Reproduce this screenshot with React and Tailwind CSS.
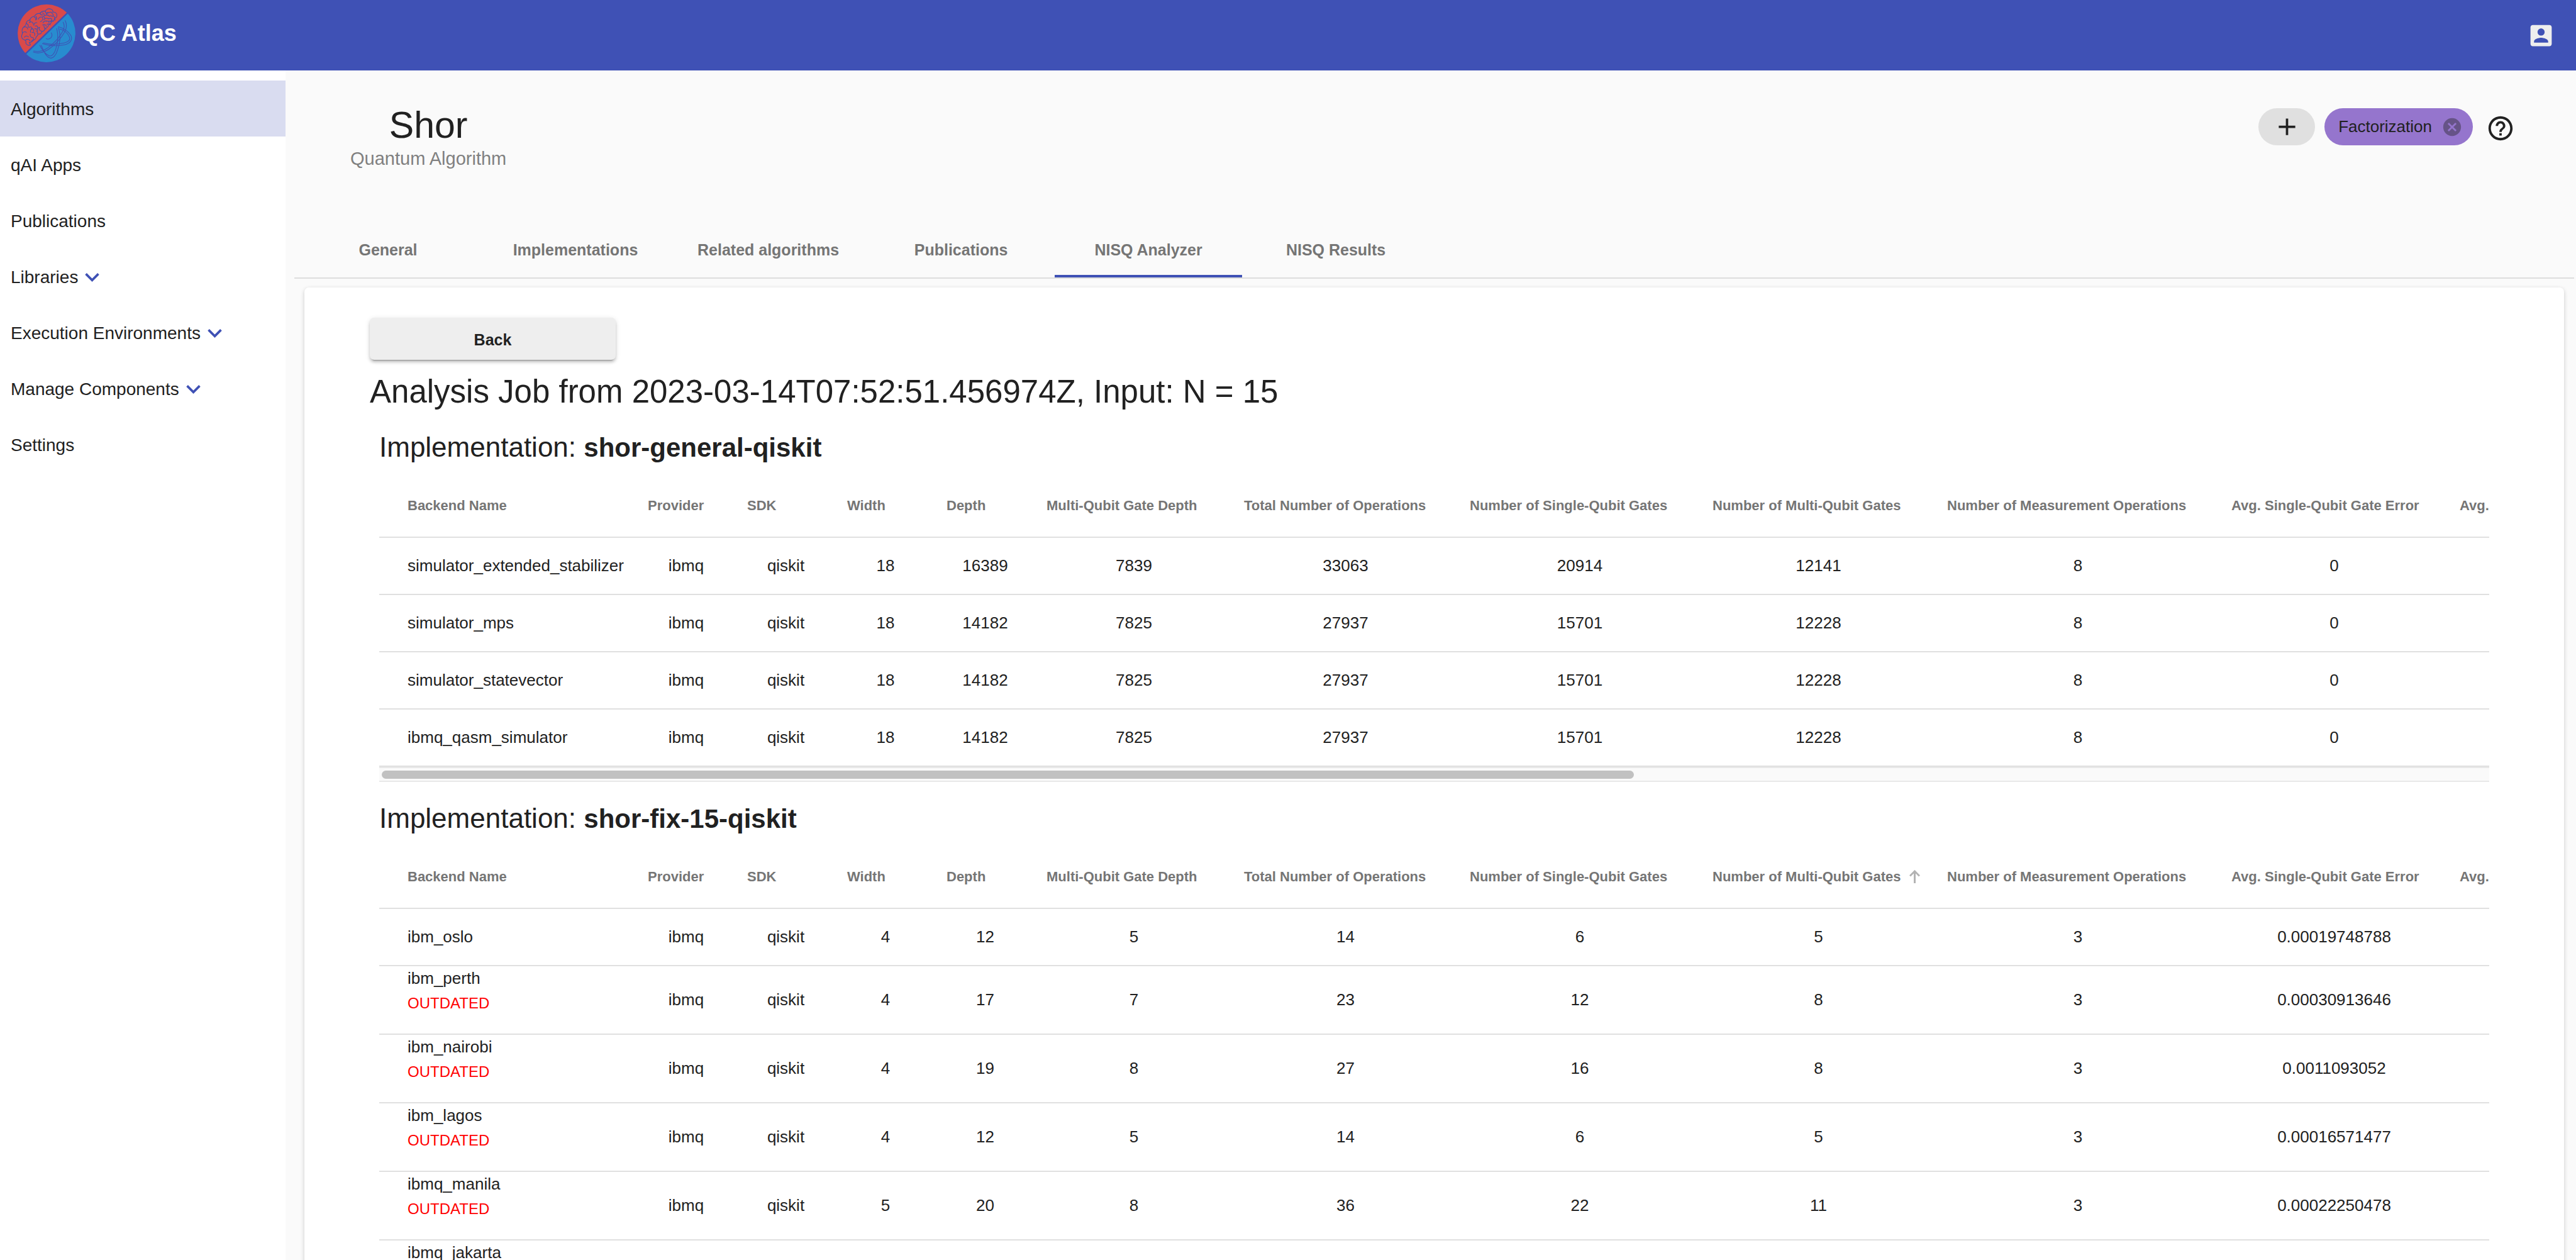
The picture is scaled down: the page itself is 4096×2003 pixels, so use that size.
import React from "react";

const LINKS = [
  { label: "Algorithms", active: true },
  { label: "qAI Apps" },
  { label: "Publications" },
  { label: "Libraries", expandable: true },
  { label: "Execution Environments", expandable: true },
  { label: "Manage Components", expandable: true },
  { label: "Settings" },
];

const TABS = [
  "General",
  "Implementations",
  "Related algorithms",
  "Publications",
  "NISQ Analyzer",
  "NISQ Results",
];

const COLUMNS = [
  { label: "Backend Name", width: "w-[409px]" },
  { label: "Provider", width: "w-[158px]" },
  { label: "SDK", width: "w-[159px]" },
  { label: "Width", width: "w-[158px]" },
  { label: "Depth", width: "w-[159px]" },
  { label: "Multi-Qubit Gate Depth", width: "w-[314px]" },
  { label: "Total Number of Operations", width: "w-[359px]" },
  { label: "Number of Single-Qubit Gates", width: "w-[386px]" },
  { label: "Number of Multi-Qubit Gates", width: "w-[373px]" },
  { label: "Number of Measurement Operations", width: "w-[452px]" },
  { label: "Avg. Single-Qubit Gate Error", width: "w-[363px]" },
  { label: "Avg. Multi-Qubit Gate Error", width: "w-[368px]" },
];

const GENERAL_ROWS = [
  { name: "simulator_extended_stabilizer", cells: ["ibmq", "qiskit", "18", "16389", "7839", "33063", "20914", "12141", "8", "0"] },
  { name: "simulator_mps", cells: ["ibmq", "qiskit", "18", "14182", "7825", "27937", "15701", "12228", "8", "0"] },
  { name: "simulator_statevector", cells: ["ibmq", "qiskit", "18", "14182", "7825", "27937", "15701", "12228", "8", "0"] },
  { name: "ibmq_qasm_simulator", cells: ["ibmq", "qiskit", "18", "14182", "7825", "27937", "15701", "12228", "8", "0"] },
];

const FIX_ROWS = [
  { name: "ibm_oslo", cells: ["ibmq", "qiskit", "4", "12", "5", "14", "6", "5", "3", "0.00019748788"] },
  { name: "ibm_perth", outdated: true, cells: ["ibmq", "qiskit", "4", "17", "7", "23", "12", "8", "3", "0.00030913646"] },
  { name: "ibm_nairobi", outdated: true, cells: ["ibmq", "qiskit", "4", "19", "8", "27", "16", "8", "3", "0.0011093052"] },
  { name: "ibm_lagos", outdated: true, cells: ["ibmq", "qiskit", "4", "12", "5", "14", "6", "5", "3", "0.00016571477"] },
  { name: "ibmq_manila", outdated: true, cells: ["ibmq", "qiskit", "5", "20", "8", "36", "22", "11", "3", "0.00022250478"] },
  { name: "ibmq_jakarta", outdated: true, cells: ["", "", "", "", "", "", "", "", "", ""] },
];

function Icon({ d, className }) {
  return (
    <svg viewBox="0 0 24 24" fill="currentColor" aria-hidden="true" className={className}>
      <path d={d} />
    </svg>
  );
}

const ACCOUNT_BOX =
  "M3 5v14c0 1.1.89 2 2 2h14c1.1 0 2-.9 2-2V5c0-1.1-.9-2-2-2H5c-1.11 0-2 .9-2 2zm12 4c0 1.66-1.34 3-3 3s-3-1.34-3-3 1.34-3 3-3 3 1.34 3 3zm-9 8c0-2 4-3.1 6-3.1s6 1.1 6 3.1v1H6v-1z";
const EXPAND_MORE = "M16.59 8.59L12 13.17 7.41 8.59 6 10l6 6 6-6z";
const ADD = "M19 13h-6v6h-2v-6H5v-2h6V5h2v6h6v2z";
const CANCEL =
  "M12 2C6.47 2 2 6.47 2 12s4.47 10 10 10 10-4.47 10-10S17.53 2 12 2zm5 13.59L15.59 17 12 13.41 8.41 17 7 15.59 10.59 12 7 8.41 8.41 7 12 10.59 15.59 7 17 8.41 13.41 12 17 15.59z";
const HELP_OUTLINE =
  "M11 18h2v-2h-2v2zm1-16C6.48 2 2 6.48 2 12s4.48 10 10 10 10-4.48 10-10S17.52 2 12 2zm0 18c-4.41 0-8-3.59-8-8s3.59-8 8-8 8 3.59 8 8-3.59 8-8 8zm0-14c-2.21 0-4 1.79-4 4h2c0-1.1.9-2 2-2s2 .9 2 2c0 2-3 1.75-3 5h2c0-2.25 3-2.5 3-5 0-2.21-1.79-4-4-4z";

function Logo() {
  return (
    <svg viewBox="12 12 342 342" aria-hidden="true" className="size-[92px]">
      <path d="M57.300 298.900A171 171 0 0 1 302.500 60.700Z" fill="#d94a4a" />
      <path d="M63.500 305.300A171 171 0 0 0 308.700 67.100Z" fill="#288ccf" />
      <g fill="none" stroke="#3f51b5" strokeLinecap="round" strokeLinejoin="round" strokeWidth="4">
        <path d="M88 252c-12 6-26-2-28-14 4-6 0-12-6-16-12-2-20-12-18-24 0-8 6-12 4-18-4-14 0-28 10-36 8-6 12-10 12-18 2-14 12-20 22-22 4-12 14-20 28-22 6-12 18-18 32-16 6-10 18-16 32-14 6-12 20-18 32-12 10 2 14 10 12 18 12-2 24 4 24 16 2 12-6 20-14 20 0 14-8 20-18 20-2 10-8 16-16 18-4 14-10 20-22 22-2 12-8 18-18 16 0 12-10 20-22 16-2 10-6 14-12 18-2 12-12 20-24 20-4 10-10 16-18 12z" />
        <path d="M64 124c10 4 14 14 10 22M50 146c10-4 20 0 22 12M40 182c8-10 18-10 24-4M52 206c4-8 16-10 24-2M60 222c10-8 20-4 26 6M84 102c4 8 2 14-2 18M82 118c10-6 22-2 22 10M78 148c12-6 20-2 20 8-8 2-14 12-8 22M92 156c14-2 18 8 14 16M98 178c12-2 20 6 14 18M86 188c-2 14 8 22 18 20M104 208c4 10 0 20-8 24M110 86c8 4 12 10 10 18M120 82c8 10 6 18-2 22M108 136c-2-10 8-18 18-16M116 140c12-4 18 4 14 14M112 156c10-2 18 4 18 12M122 170c8 0 10 8 6 16M128 166c-2-10 6-18 16-18M140 148c-2 12 4 20 14 22M134 100c4-12 16-18 26-10 2 12-4 22-14 24M160 84c8-2 14 4 12 12M144 64c2 8 8 12 16 10M158 62c8 2 14 10 10 16M176 50c-2 10 6 16 14 14M184 70c-6-6 4-14 12-8 8-8 20-4 20 4M172 78c12-6 22-2 28 4 8-6 14-2 16 2M166 102c10-8 22-10 30-4M162 120c4-8 12-12 22-10M160 134c10-6 20-2 22 8M182 112c8-4 16 0 16 8M194 98c10-6 20-4 20 4-2 10-10 12-16 8M186 130c10-6 18-2 20 4M216 66c6 2 8 10 4 14M220 82c10-2 14 6 10 14M232 94c-4 4-2 10 4 10M224 110c-8-4-14-2-16 4M168 136c-2 10 4 20 12 22" />
      </g>
      <g fill="none" stroke="#3f51b5" strokeLinecap="round" strokeWidth="4">
        <path d="M281 117c8 14 8 32 0 50-22 42-60 80-94 104-28 18-56 22-80 16M293 108c12 22 10 42-2 66-24 42-62 80-96 104-32 20-62 26-90 16" />
        <path d="M253 144c28 6 62 28 76 56 8 24-8 42-36 50-44 10-90 8-134-6M262 158c24 6 46 24 56 46 8 18-6 30-30 36-40 10-84 10-124 0" />
        <path d="M243 154c10 38 8 84-6 124-8 24-22 44-38 38-20-8-42-34-56-62M254 150c12 40 10 90-6 132-8 28-26 54-46 46-24-8-38-44-50-74" />
        <path d="M211 180c8 12 4 28-8 34-8 4-16 4-22 0" />
      </g>
    </svg>
  );
}

function ResultTable({ implementation, rows, sortedBy, scrollbar }) {
  return (
    <section className="mx-[15px] mt-[30px]">
      <h2 className="mb-[10px] text-[44px] leading-[56px]">
        Implementation: <strong className="text-[42px] font-bold">{implementation}</strong>
      </h2>
      <div className="overflow-hidden">
        <table className="w-[3658px] table-fixed border-separate border-spacing-0">
          <thead>
            <tr>
              {COLUMNS.map(({ label, width }, i) => (
                <th
                  key={label}
                  scope="col"
                  className={`${width} ${i === 0 ? "pl-[45px]" : "pl-[18px]"} h-[105px] border-b-2 border-[#e0e0e0] pt-1 pr-0 pb-0 text-left`}
                >
                  <button type="button" className="flex items-center gap-[14px] text-[22px] font-bold whitespace-nowrap text-[#757575]">
                    {label}
                    {sortedBy === label && (
                      <svg viewBox="0 0 17 21" aria-hidden="true" className="h-[21px] w-[17px]">
                        <path d="M8.5 21V2M1 9.500 8.500 2 16 9.500" fill="none" stroke="#b3b3b3" strokeWidth="3" />
                      </svg>
                    )}
                  </button>
                </th>
              ))}
            </tr>
          </thead>
          <tbody className="text-[26px] leading-[39px]">
            {rows.map(({ name, outdated, cells }) => (
              <tr key={name} className={outdated ? "h-[109px]" : "h-[91px]"}>
                <td className={`${outdated ? "align-top" : "align-middle"} border-b-2 border-[#e0e0e0] pl-[45px] whitespace-nowrap`}>
                  <p>{name}</p>
                  {outdated && <p className="text-[24px] text-[#ff0000]">OUTDATED</p>}
                </td>
                {cells.map((value, i) => (
                  <td key={i} className="border-b-2 border-[#e0e0e0] text-center align-middle">
                    {value}
                  </td>
                ))}
                <td className="border-b-2 border-[#e0e0e0]" />
              </tr>
            ))}
          </tbody>
        </table>
        {scrollbar && (
          <div className="flex h-[24px] items-center border-y-2 border-[#e8e8e8] bg-[#fafafa] px-1">
            <div className="h-[13px] w-[59.5%] rounded-full bg-[#c1c1c1]" />
          </div>
        )}
      </div>
    </section>
  );
}

export default function App() {
  return (
    <div className="flex h-screen flex-col overflow-hidden bg-[#fafafa] font-['Liberation_Sans',Arial,sans-serif] text-[#212121]">
      <header className="flex h-[112px] shrink-0 items-center justify-between bg-[#3f51b5] pr-[33px] pl-[28px]">
        <a href="#home" className="mb-[6px] flex items-center gap-[10px] text-[36px] font-bold text-white">
          <Logo />
          QC Atlas
        </a>
        <button type="button" aria-label="Account" className="text-[#eeeeee]">
          <Icon d={ACCOUNT_BOX} className="size-[45px]" />
        </button>
      </header>

      <div className="flex min-h-0 flex-1">
        <nav className="w-[454px] shrink-0 bg-white pt-4 text-[28px]">
          {LINKS.map(({ label, active, expandable }) => (
            <a
              key={label}
              href="#section"
              className={`flex h-[89px] items-center px-[17px] pt-0.5 ${active ? "bg-[#d9dcf0]" : ""}`}
            >
              {label}
              {expandable && <Icon d={EXPAND_MORE} className="size-[45px] text-[#3f51b5]" />}
            </a>
          ))}
        </nav>

        <main className="flex min-w-0 flex-1 flex-col pr-[3px] pl-[14px]">
          <div className="flex h-[238px] shrink-0 items-start justify-between pr-[94px] pl-[89px]">
            <div className="pt-[52px] text-center">
              <h1 className="text-[59px] leading-[70px]">Shor</h1>
              <p className="text-[29px] leading-[36px] text-[#808080]">Quantum Algorithm</p>
            </div>
            <div className="flex items-center pt-[60px]">
              <button type="button" aria-label="Add tag" className="flex h-[59px] w-[90px] items-center justify-center rounded-full bg-[#e0e0e0]">
                <Icon d={ADD} className="size-[45px]" />
              </button>
              <span className="ml-[15px] flex h-[59px] items-center gap-[15px] rounded-full bg-[#9575cd] pr-4 pl-[22px] text-[26px]">
                Factorization
                <button type="button" aria-label="Remove Factorization">
                  <Icon d={CANCEL} className="size-[34px] opacity-40" />
                </button>
              </span>
              <button type="button" aria-label="Help" className="mt-1 ml-[21px]">
                <Icon d={HELP_OUTLINE} className="size-[46px]" />
              </button>
            </div>
          </div>

          <div role="tablist" className="flex h-[93px] shrink-0 border-b-2 border-[#dddddd]">
            {TABS.map((label) => {
              const selected = label === "NISQ Analyzer";
              return (
                <button
                  key={label}
                  type="button"
                  role="tab"
                  aria-selected={selected}
                  className={`min-w-[298px] border-b-4 px-[45px] pt-2 text-[25px] font-bold text-[#757575] ${selected ? "border-[#3f51b5]" : "border-transparent"}`}
                >
                  {label}
                </button>
              );
            })}
          </div>

          <div className="mx-4 mt-[14px] flex-1 rounded-t-[7px] bg-white px-[104px] pt-[48px] shadow-[0_2px_6px_rgba(0,0,0,0.2)]">
            <button
              type="button"
              className="block h-[67px] w-[391px] rounded-[7px] bg-[#eeeeee] pt-1 text-[25px] font-bold shadow-[0_5px_2px_-4px_rgba(0,0,0,0.3),0_4px_4px_rgba(0,0,0,0.16),0_2px_9px_rgba(0,0,0,0.12)]"
            >
              Back
            </button>
            <p className="mt-[21px] text-[51px] leading-[60px]">
              Analysis Job from 2023-03-14T07:52:51.456974Z, Input: N = 15
            </p>
            <ResultTable implementation="shor-general-qiskit" rows={GENERAL_ROWS} scrollbar />
            <ResultTable implementation="shor-fix-15-qiskit" rows={FIX_ROWS} sortedBy="Number of Multi-Qubit Gates" />
          </div>
        </main>
      </div>
    </div>
  );
}
